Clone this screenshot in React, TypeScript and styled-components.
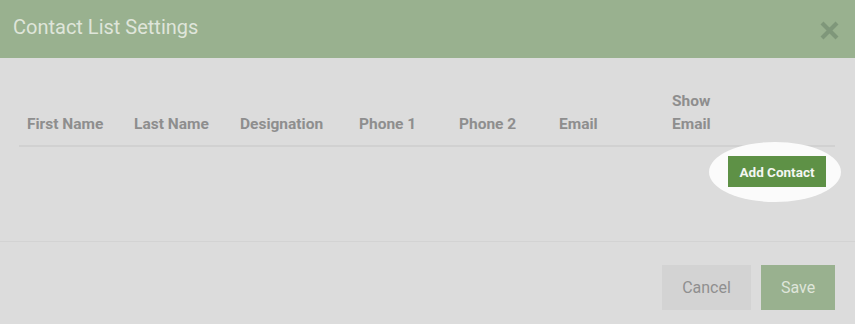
import React from "react";
import styled, { createGlobalStyle } from "styled-components";

const Global = createGlobalStyle`
  html, body { margin: 0; padding: 0; background: #dcdcdc; }
  body { font-family: Roboto, "Liberation Sans", sans-serif; }
  * { box-sizing: border-box; }
`;

const Modal = styled.div`
  width: 855px;
  height: 324px;
  background: #dcdcdc;
  display: flex;
  flex-direction: column;
  overflow: hidden;
`;

const Header = styled.div`
  height: 58px;
  background: #99b18f;
  display: flex;
  align-items: center;
  justify-content: space-between;
  padding: 0 16px 0 13px;
  flex-shrink: 0;
`;

const Title = styled.h2`
  margin: 0 0 4px;
  font-size: 20px;
  font-weight: 400;
  color: #dfe5da;
  letter-spacing: 0;
`;

const Close = styled.button`
  border: 0;
  background: none;
  padding: 0;
  width: 20px;
  height: 20px;
  display: flex;
  align-items: center;
  justify-content: center;
  margin-top: 2px;
`;

const Body = styled.div`
  height: 184px;
  padding: 0 20px 0 19px;
  border-bottom: 1px solid #d3d3d3;
  flex-shrink: 0;
`;

const HeadRow = styled.div`
  display: grid;
  grid-template-columns: 107px 106px 119px 100px 100px 113px 1fr;
  align-items: end;
  padding: 32px 0 9px;
  border-bottom: 2px solid #d1d1d1;
`;

const Th = styled.div`
  padding: 0 8px;
  font-size: 15.5px;
  font-weight: 700;
  color: #8e8e8e;
  line-height: 23px;
`;

const Actions = styled.div`
  display: flex;
  justify-content: flex-end;
  padding: 9px 9px 0 0;
`;

const Spot = styled.div`
  position: relative;
  display: inline-flex;
`;

const Ellipse = styled.div`
  position: absolute;
  left: -19px;
  top: -14px;
  width: 132px;
  height: 60px;
  border-radius: 50%;
  background: #fbfbfb;
`;

const AddButton = styled.button`
  position: relative;
  width: 98px;
  height: 31px;
  border: 0;
  background: #5e9146;
  color: #f4f6f2;
  font-family: Roboto, "Liberation Sans", sans-serif;
  font-size: 13.5px;
  font-weight: 700;
  padding: 0;
`;

const Footer = styled.div`
  display: flex;
  justify-content: flex-end;
  gap: 10px;
  padding: 23px 20px 0 0;
`;

const FootButton = styled.button<{ $primary?: boolean }>`
  height: 45px;
  width: ${(p) => (p.$primary ? "74px" : "89px")};
  border: 0;
  padding: 0;
  background: ${(p) => (p.$primary ? "#99b18f" : "#d3d3d3")};
  color: ${(p) => (p.$primary ? "#dfe5da" : "#8f8f8f")};
  font-family: Roboto, "Liberation Sans", sans-serif;
  font-size: 16px;
  font-weight: 400;
`;

const columns = ["First Name", "Last Name", "Designation", "Phone 1", "Phone 2", "Email"];

export default function App() {
  return (
    <>
      <Global />
      <Modal>
        <Header>
          <Title>Contact List Settings</Title>
          <Close aria-label="close">
            <svg width="19" height="19" viewBox="0 0 19 19">
              <path d="M2 2 L17 17 M17 2 L2 17" stroke="#7f977a" strokeWidth="4.2" strokeLinecap="butt" />
            </svg>
          </Close>
        </Header>
        <Body>
          <HeadRow>
            {columns.map((c) => (
              <Th key={c}>{c}</Th>
            ))}
            <Th>
              Show
              <br />
              Email
            </Th>
          </HeadRow>
          <Actions>
            <Spot>
              <Ellipse />
              <AddButton>Add Contact</AddButton>
            </Spot>
          </Actions>
        </Body>
        <Footer>
          <FootButton>Cancel</FootButton>
          <FootButton $primary>Save</FootButton>
        </Footer>
      </Modal>
    </>
  );
}
